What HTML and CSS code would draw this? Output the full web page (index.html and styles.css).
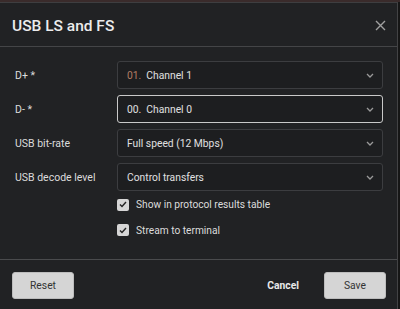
FILE: index.html
```html
<!DOCTYPE html>
<html lang="en">
<head>
    <meta charset="UTF-8">
    <meta name="viewport" content="width=device-width, initial-scale=1.0">
    <title>USB LS and FS</title>
    <link rel="stylesheet" href="styles.css">
</head>
<body>
    <div class="dialog">
        <div class="dialog-header">
            <h1 class="dialog-title">USB LS and FS</h1>
            <svg class="close-btn" width="11" height="11" viewBox="0 0 11 11"><path d="M1 1 L10 10 M10 1 L1 10" stroke="#a0a0a0" stroke-width="1.4"/></svg>
        </div>
        <div class="dialog-body">
            <div class="field">
                <label class="field-label">D+ *</label>
                <div class="select">
                    <span class="select-value"><span class="ch-num ch-orange">01.</span>Channel 1</span>
                    <svg class="chevron" width="8" height="5" viewBox="0 0 8 5"><path d="M1 1 L4 4 L7 1" fill="none" stroke="#9a9a9a" stroke-width="1.3"/></svg>
                </div>
            </div>
            <div class="field">
                <label class="field-label">D- *</label>
                <div class="select focused">
                    <span class="select-value"><span class="ch-num">00.</span>Channel 0</span>
                    <svg class="chevron" width="8" height="5" viewBox="0 0 8 5"><path d="M1 1 L4 4 L7 1" fill="none" stroke="#9a9a9a" stroke-width="1.3"/></svg>
                </div>
            </div>
            <div class="field">
                <label class="field-label">USB bit-rate</label>
                <div class="select">
                    <span class="select-value">Full speed (12 Mbps)</span>
                    <svg class="chevron" width="8" height="5" viewBox="0 0 8 5"><path d="M1 1 L4 4 L7 1" fill="none" stroke="#9a9a9a" stroke-width="1.3"/></svg>
                </div>
            </div>
            <div class="field">
                <label class="field-label">USB decode level</label>
                <div class="select">
                    <span class="select-value">Control transfers</span>
                    <svg class="chevron" width="8" height="5" viewBox="0 0 8 5"><path d="M1 1 L4 4 L7 1" fill="none" stroke="#9a9a9a" stroke-width="1.3"/></svg>
                </div>
            </div>
            <div class="checks">
                <div class="check-row">
                    <span class="checkbox"><svg width="8" height="7" viewBox="0 0 8 7"><path d="M1 3.5 L3 5.5 L7 1" fill="none" stroke="#222" stroke-width="1.4"/></svg></span>
                    <span class="check-label">Show in protocol results table</span>
                </div>
                <div class="check-row">
                    <span class="checkbox"><svg width="8" height="7" viewBox="0 0 8 7"><path d="M1 3.5 L3 5.5 L7 1" fill="none" stroke="#222" stroke-width="1.4"/></svg></span>
                    <span class="check-label">Stream to terminal</span>
                </div>
            </div>
        </div>
        <div class="dialog-footer">
            <button class="btn">Reset</button>
            <div class="footer-right">
                <button class="btn-link">Cancel</button>
                <button class="btn">Save</button>
            </div>
        </div>
    </div>
</body>
</html>
```

FILE: styles.css
```css
body, html {
    margin: 0;
    padding: 0;
    height: 100%;
    overflow: hidden;
    background-color: #161616;
    font-family: Roboto, "Liberation Sans", sans-serif;
}
body {
    border-top: 2px solid #3a2b2b;
}
.dialog {
    width: 398px;
    height: 320px;
    background-color: #212224;
    border-top: 1px solid #3e3e40;
    border-right: 1px solid #434345;
    box-sizing: border-box;
    color: #e6e6e6;
}
.dialog-header {
    height: 43px;
    display: flex;
    align-items: center;
    justify-content: space-between;
    padding: 0 11px 0 12px;
    border-bottom: 1px solid #444547;
}
.dialog-title {
    margin: 0;
    font-size: 15.5px;
    font-weight: 500;
    color: #ececec;
    padding-top: 2px;
}
.close-btn {
    display: block;
    margin-top: 1px;
}
.dialog-body {
    padding: 14px 14px 0 15px;
    height: 212px;
    box-sizing: border-box;
}
.field {
    display: flex;
    align-items: center;
    margin-bottom: 6px;
}
.field-label {
    width: 102px;
    font-size: 10.5px;
    color: #dcdcdc;
}
.select {
    flex: 1;
    height: 28px;
    box-sizing: border-box;
    border: 1px solid #3c3d40;
    border-radius: 3px;
    background-color: #1d1e20;
    display: flex;
    align-items: center;
    justify-content: space-between;
    padding: 0 8px 0 9px;
    font-size: 10.3px;
    color: #e0e0e0;
}
.select.focused {
    border-color: #c9c9c9;
}
.ch-num {
    margin-right: 5px;
}
.ch-orange {
    color: #b27d63;
}
.chevron {
    display: block;
}
.checks {
    padding-left: 102px;
    padding-top: 1px;
}
.check-row {
    display: flex;
    align-items: center;
    height: 13px;
    margin-bottom: 12.5px;
}
.checkbox {
    width: 12px;
    height: 12px;
    border-radius: 2px;
    background-color: #d6d6d6;
    display: flex;
    align-items: center;
    justify-content: center;
    margin-right: 7px;
}
.checkbox svg {
    display: block;
}
.check-label {
    font-size: 10.2px;
    color: #dcdcdc;
}
.dialog-footer {
    border-top: 1px solid #4a4b4d;
    display: flex;
    align-items: center;
    justify-content: space-between;
    padding: 12px 11px 0 12px;
}
.footer-right {
    display: flex;
    align-items: center;
    gap: 25px;
}
.btn {
    width: 62px;
    height: 27px;
    border: 1px solid #bdbdbd;
    border-radius: 3px;
    background-color: #d5d5d5;
    color: #333;
    font-family: Roboto, "Liberation Sans", sans-serif;
    font-size: 10.3px;
}
.btn-link {
    border: none;
    background: none;
    color: #e8e8e8;
    font-family: Roboto, "Liberation Sans", sans-serif;
    font-size: 10.3px;
    font-weight: 700;
    padding: 0;
}
```
